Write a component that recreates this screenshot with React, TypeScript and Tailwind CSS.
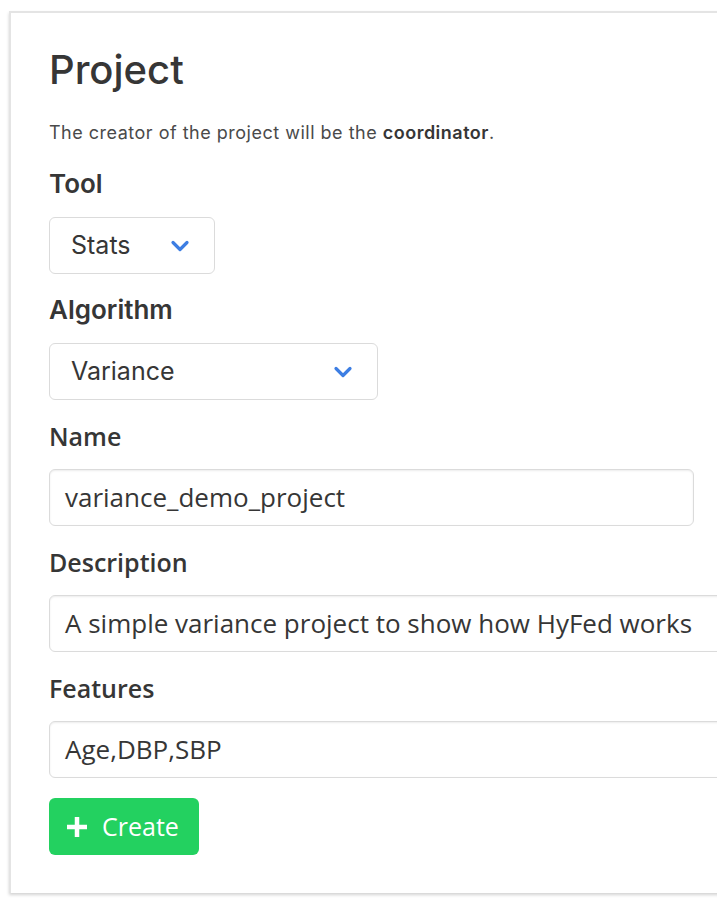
import React from 'react';

const heading = "font-['Inter','Liberation_Sans',sans-serif]";
const body = "font-['Open_Sans','Liberation_Sans',sans-serif]";

const Chevron: React.FC = () => (
  <svg width="20" height="14" viewBox="0 0 20 14" fill="none" className="shrink-0">
    <path d="M3 3.5 L10 10.5 L17 3.5" stroke="#3d7ee3" strokeWidth="3.2" strokeLinecap="round" strokeLinejoin="round" />
  </svg>
);

const Label: React.FC<{ text: string; alt?: boolean }> = ({ text, alt }) => (
  <div
    className={
      alt
        ? `${body} h-[30px] leading-[30px] text-[25px] font-semibold text-[#363636]`
        : `${heading} h-[30px] leading-[30px] text-[26px] font-semibold text-[#363636]`
    }
  >
    {text}
  </div>
);

const SelectBox: React.FC<{ value: string; width: string }> = ({ value, width }) => (
  <div
    className={`${heading} ${width} h-[57px] mt-[18px] flex items-center justify-between pl-[21px] pr-[24px] rounded-[6px] border border-[#dbdbdb] bg-white text-[25px] text-[#363636]`}
  >
    <span>{value}</span>
    <Chevron />
  </div>
);

const TextBox: React.FC<{ value: string; width: string }> = ({ value, width }) => (
  <div
    className={`${body} ${width} h-[57px] mt-[18px] flex items-center px-[15px] rounded-[6px] border border-[#dbdbdb] bg-white text-[26px] text-[#363636] shadow-[inset_0_1px_2px_rgba(10,10,10,0.08)] whitespace-nowrap overflow-hidden`}
  >
    {value}
  </div>
);

const App: React.FC = () => {
  return (
    <div className="w-[717px] h-[904px] overflow-hidden bg-white">
      <div className="ml-[9px] mt-[11px] w-[760px] h-[882px] bg-white border-2 border-[#e4e4e4] border-b-0 shadow-[0_2px_3px_rgba(10,10,10,0.18)] pl-[38px] pt-[33px]">
        <h1 className={`${heading} text-[40px] leading-[48px] font-medium text-[#363636]`}>Project</h1>
        <p className={`${heading} mt-[27px] text-[18px] leading-[24px] tracking-[0.5px] text-[#4a4a4a]`}>
          The creator of the project will be the <b className="font-semibold text-[#363636]">coordinator</b>.
        </p>

        <div className="mt-[24px]">
          <Label text="Tool" />
          <SelectBox value="Stats" width="w-[166px]" />
        </div>

        <div className="mt-[21px]">
          <Label text="Algorithm" />
          <SelectBox value="Variance" width="w-[329px]" />
        </div>

        <div className="mt-[21px]">
          <Label text="Name" alt />
          <TextBox value="variance_demo_project" width="w-[645px]" />
        </div>

        <div className="mt-[21px]">
          <Label text="Description" alt />
          <TextBox value="A simple variance project to show how HyFed works" width="w-[700px]" />
        </div>

        <div className="mt-[21px]">
          <Label text="Features" alt />
          <TextBox value="Age,DBP,SBP" width="w-[700px]" />
        </div>

        <button
          className={`${body} mt-[20px] h-[57px] w-[150px] flex items-center gap-[14px] pl-[17px] rounded-[6px] bg-[#23d160] text-white text-[25px]`}
        >
          <svg width="22" height="22" viewBox="0 0 22 22">
            <path d="M11 1 V21 M1 11 H21" stroke="white" strokeWidth="4.5" />
          </svg>
          Create
        </button>
      </div>
    </div>
  );
};

export default App;
